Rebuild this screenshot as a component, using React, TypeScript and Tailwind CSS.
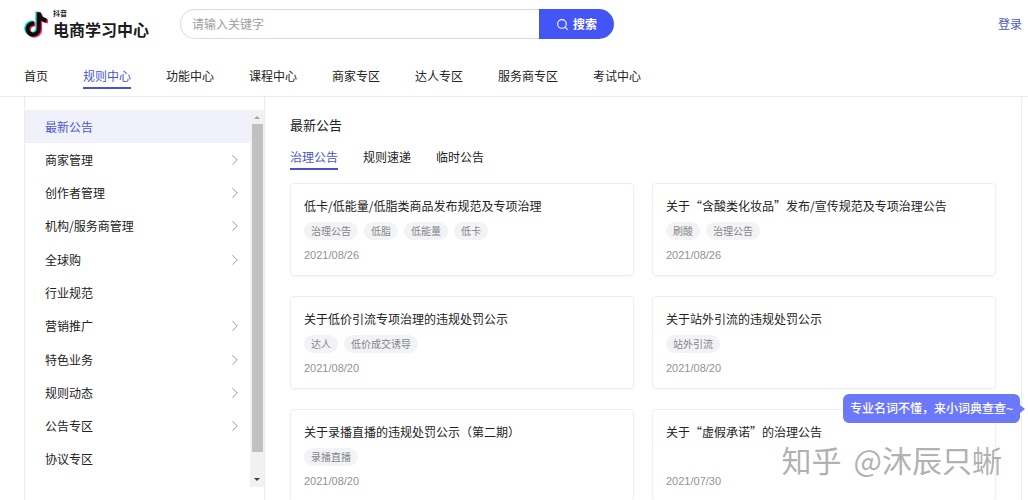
import { ChevronRight, Search } from "lucide-react";
import clsx from "clsx";

interface Notice {
  title: string;
  tags: string[];
  date: string;
}

const navItems = [
  "首页",
  "规则中心",
  "功能中心",
  "课程中心",
  "商家专区",
  "达人专区",
  "服务商专区",
  "考试中心",
];

const categories = [
  { name: "最新公告", expandable: false },
  { name: "商家管理", expandable: true },
  { name: "创作者管理", expandable: true },
  { name: "机构/服务商管理", expandable: true },
  { name: "全球购", expandable: true },
  { name: "行业规范", expandable: false },
  { name: "营销推广", expandable: true },
  { name: "特色业务", expandable: true },
  { name: "规则动态", expandable: true },
  { name: "公告专区", expandable: true },
  { name: "协议专区", expandable: false },
];

const tabs = ["治理公告", "规则速递", "临时公告"];

const notices: Notice[] = [
  {
    title: "低卡/低能量/低脂类商品发布规范及专项治理",
    tags: ["治理公告", "低脂", "低能量", "低卡"],
    date: "2021/08/26",
  },
  {
    title: "关于“含酸类化妆品”发布/宣传规范及专项治理公告",
    tags: ["刷酸", "治理公告"],
    date: "2021/08/26",
  },
  {
    title: "关于低价引流专项治理的违规处罚公示",
    tags: ["达人", "低价成交诱导"],
    date: "2021/08/20",
  },
  {
    title: "关于站外引流的违规处罚公示",
    tags: ["站外引流"],
    date: "2021/08/20",
  },
  {
    title: "关于录播直播的违规处罚公示（第二期）",
    tags: ["录播直播"],
    date: "2021/08/20",
  },
  {
    title: "关于“虚假承诺”的治理公告",
    tags: [],
    date: "2021/07/30",
  },
];

const NOTE_PATH =
  "M448,209.91a210.06,210.06,0,0,1-122.77-39.25V349.38A162.55,162.55,0,1,1,185,188.31V278.2a74.62,74.62,0,1,0,52.23,71.18V0l88,0a121.18,121.18,0,0,0,1.86,22.17h0A122.18,122.18,0,0,0,381,102.39a121.43,121.43,0,0,0,67,20.14Z";

function Logo() {
  return (
    <a href="#" className="flex w-[156px] shrink-0 items-center gap-[5px] text-[#1c1c1c]">
      <svg viewBox="-28 -28 504 568" className="h-[27px] w-6" aria-hidden="true">
        <path d={NOTE_PATH} fill="#25e5dd" transform="translate(-28 -18)" />
        <path d={NOTE_PATH} fill="#fb2c5a" transform="translate(28 22)" />
        <path d={NOTE_PATH} fill="#0c0c0c" />
      </svg>
      <span className="flex flex-col font-bold">
        <span className="text-[7px] leading-[10px]">抖音</span>
        <span className="text-base leading-[23px]">电商学习中心</span>
      </span>
    </a>
  );
}

function Header() {
  return (
    <header className="shrink-0 border-b border-[#ececec]">
      <div className="flex h-12 items-center pr-[6px] pl-6">
        <Logo />
        <form className="flex h-[30px] w-[434px]" onSubmit={(e) => e.preventDefault()}>
          <input
            type="text"
            aria-label="搜索关键字"
            placeholder="请输入关键字"
            className="min-w-0 flex-1 rounded-l-full border border-r-0 border-[#dcdcdc] pl-[11px] text-xs outline-none placeholder:text-[#a0a0a0]"
          />
          <button
            type="submit"
            className="flex w-[75px] items-center justify-center gap-1 rounded-r-full bg-[#4455f5] text-xs font-bold text-white"
          >
            <Search size={13} strokeWidth={2} />
            搜索
          </button>
        </form>
        <a href="#" className="ml-auto text-xs text-[#4a57cc]">
          登录
        </a>
      </div>

      <nav className="flex h-12 items-end gap-[35px] pb-[7px] pl-6">
        {navItems.map((item) => (
          <a
            key={item}
            href="#"
            className={clsx(
              "border-b-2 pb-px text-xs leading-5 whitespace-nowrap",
              item === "规则中心" ? "border-[#4a52c4] text-[#4a57cc]" : "border-transparent",
            )}
          >
            {item}
          </a>
        ))}
      </nav>
    </header>
  );
}

function Sidebar() {
  return (
    <aside className="ml-6 w-[241px] shrink-0 border-x border-[#ececec] pt-[13px]">
      <div className="flex h-[377px]">
        <ul className="grid h-[366px] flex-1 auto-rows-fr">
          {categories.map(({ name, expandable }, i) => (
            <li key={name}>
              <a
                href="#"
                className={clsx(
                  "flex h-full items-center justify-between pr-[6px] pl-5 text-xs",
                  i === 0 && "bg-[#f1f1fb] text-[#4a57cc]",
                )}
              >
                {name}
                {expandable && <ChevronRight size={18} strokeWidth={1} className="text-[#777]" />}
              </a>
            </li>
          ))}
        </ul>

        {/* Scrollbar */}
        <div className="flex w-[14px] flex-col items-center bg-[#f1f1f1]" aria-hidden="true">
          <svg viewBox="0 0 14 14" className="h-[14px] w-[14px]">
            <path d="M4 9h6L7 6z" fill="#a3a3a3" />
          </svg>
          <div className="h-[328px] w-[11px] bg-[#c1c1c1]" />
          <svg viewBox="0 0 14 14" className="mt-auto h-[14px] w-[14px]">
            <path d="M4 5h6L7 8z" fill="#404040" />
          </svg>
        </div>
      </div>
    </aside>
  );
}

function NoticeCard({ title, tags, date }: Notice) {
  return (
    <a
      href="#"
      className="block rounded border border-[#eeeeee] px-[13px] py-3 shadow-[0_1px_2px_rgba(0,0,0,0.04)]"
    >
      <h3 className="truncate text-xs leading-5">{title}</h3>
      <div className="mt-[6px] flex h-[18px] gap-[6px]">
        {tags.map((tag) => (
          <span
            key={tag}
            className="rounded-full bg-[#f2f3f5] px-[7px] text-[10px] leading-[18px] text-[#858585]"
          >
            {tag}
          </span>
        ))}
      </div>
      <time className="mt-[7px] block font-['Liberation_Sans',sans-serif] text-[11px] leading-4 text-[#929292]">
        {date}
      </time>
    </a>
  );
}

export default function App() {
  return (
    <div
      lang="zh-CN"
      className="relative flex h-screen flex-col overflow-hidden bg-white font-['Noto_Sans_CJK_SC',sans-serif] text-[#222]"
    >
      <Header />

      <div className="flex min-h-0 flex-1">
        <Sidebar />
        <main className="mr-[6px] min-w-0 flex-1 border-r border-[#ececec] px-[25px] pt-[18px]">
          <h2 className="text-[13px] leading-5">最新公告</h2>
          <div className="mt-3 flex gap-[25px]">
            {tabs.map((tab, i) => (
              <button
                key={tab}
                type="button"
                className={clsx(
                  "border-b-2 pb-px text-xs leading-5",
                  i === 0 ? "border-[#4a52c4] text-[#4a57cc]" : "border-transparent",
                )}
              >
                {tab}
              </button>
            ))}
          </div>
          <div className="mt-[13px] grid grid-cols-2 gap-x-[18px] gap-y-5">
            {notices.map((notice) => (
              <NoticeCard key={notice.title} {...notice} />
            ))}
          </div>
        </main>
      </div>

      {/* Dictionary hint */}
      <div className="absolute right-[3px] bottom-[77px] flex items-center">
        <span className="rounded-md bg-[#6b78f8] px-[7px] text-xs leading-7 font-medium text-white">
          专业名词不懂，来小词典查查
          <span className="font-['Liberation_Sans',sans-serif]">~</span>
        </span>
        <svg viewBox="0 0 5 8" className="h-2 w-[5px]" aria-hidden="true">
          <path d="M0 0l5 4-5 4z" fill="#6b78f8" />
        </svg>
      </div>

      {/* Watermark */}
      <div className="pointer-events-none absolute right-[26px] bottom-[21px] flex gap-3 text-3xl leading-10 text-[#9c9c9c]/80 [text-shadow:-1px_-1px_0_#fff]">
        <span>知乎</span>
        <span>@沐辰只蜥</span>
      </div>
    </div>
  );
}
